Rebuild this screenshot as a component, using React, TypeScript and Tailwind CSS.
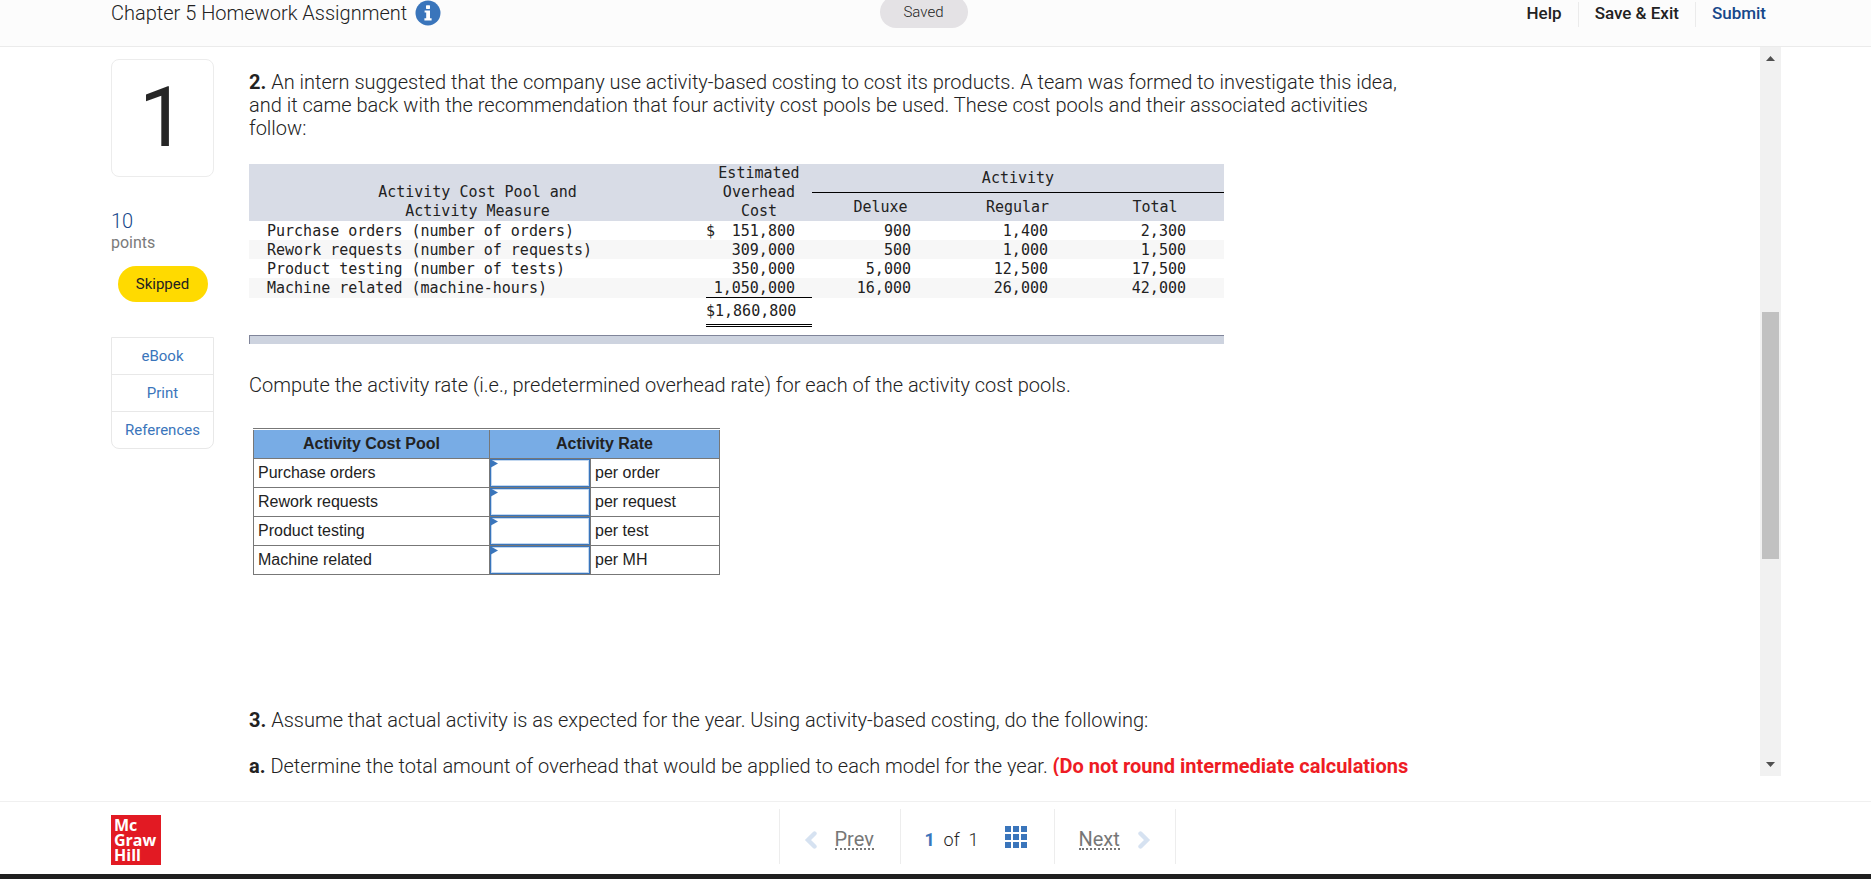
import type { ReactNode } from "react";

const pools = [
  { name: "Purchase orders", measure: "(number of orders)", cost: "151,800", dollar: true, deluxe: "900", regular: "1,400", total: "2,300" },
  { name: "Rework requests", measure: "(number of requests)", cost: "309,000", dollar: false, deluxe: "500", regular: "1,000", total: "1,500" },
  { name: "Product testing", measure: "(number of tests)", cost: "350,000", dollar: false, deluxe: "5,000", regular: "12,500", total: "17,500" },
  { name: "Machine related", measure: "(machine-hours)", cost: "1,050,000", dollar: false, deluxe: "16,000", regular: "26,000", total: "42,000" },
];

const rates = [
  { id: "rate-orders", pool: "Purchase orders", unit: "per order" },
  { id: "rate-requests", pool: "Rework requests", unit: "per request" },
  { id: "rate-tests", pool: "Product testing", unit: "per test" },
  { id: "rate-mh", pool: "Machine related", unit: "per MH" },
];

function InfoIcon() {
  return (
    <svg viewBox="0 0 26 26" className="size-[26px]" aria-hidden="true">
      <circle cx="13" cy="13" r="12.5" fill="#3a75bb" />
      <rect x="11" y="5.3" width="4" height="3.6" rx="0.6" fill="#fff" />
      <path d="M9.6 10.4H15V18.2H16.6V20.4H9.4V18.2H11.2V12.6H9.6Z" fill="#fff" />
    </svg>
  );
}

function Chevron({ direction }: { direction: "left" | "right" }) {
  return (
    <svg viewBox="0 0 14 18" className="h-[18px] w-[14px]" aria-hidden="true">
      <path
        d={direction === "left" ? "M10.5 2.5 4 9l6.5 6.5" : "M3.5 2.5 10 9l-6.5 6.5"}
        fill="none"
        stroke="#d6e2f1"
        strokeWidth="4.4"
        strokeLinecap="round"
        strokeLinejoin="miter"
      />
    </svg>
  );
}

function GridIcon() {
  return (
    <svg viewBox="0 0 22 22" className="size-[22px]" fill="#3a75bb" aria-hidden="true">
      {[0, 8, 16].map((y) => [0, 8, 16].map((x) => <rect key={x + "-" + y} x={x} y={y} width="6" height="6" />))}
    </svg>
  );
}

function Header() {
  return (
    <header className="grid h-[47px] shrink-0 grid-cols-[1fr_auto_1fr] items-start border-b border-[#ebebeb] bg-[#fcfcfc] pr-[135px] pl-[111px]">
      <div className="flex items-center gap-2">
        <h1 className="text-[20px] leading-6 font-light">Chapter 5 Homework Assignment</h1>
        <button type="button" aria-label="Assignment information">
          <InfoIcon />
        </button>
      </div>
      <div className="-mt-1 flex h-8 w-[88px] items-center justify-center rounded-full bg-[#e4e2e5] text-[15px] leading-5 font-light">
        Saved
      </div>
      <nav className="-mr-[30px] flex items-center justify-end pt-[2px] text-[17px] leading-[22px] font-medium whitespace-nowrap">
        <button type="button" className="h-[25px] border-r border-[#ebebeb] pr-4 pb-[3px]">Help</button>
        <button type="button" className="h-[25px] border-r border-[#ebebeb] px-4 pb-[3px]">Save &amp; Exit</button>
        <button type="button" className="h-[25px] pb-[3px] pl-4 text-[#16478a]">Submit</button>
      </nav>
    </header>
  );
}

function SideLink({ children, last = false }: { children: ReactNode; last?: boolean }) {
  return (
    <li className={last ? "" : "border-b border-[#e8e8e8]"}>
      <a href="#" className="flex h-9 items-center justify-center">{children}</a>
    </li>
  );
}

function Sidebar() {
  return (
    <aside className="w-[103px] shrink-0 pt-3">
      <div className="flex h-[118px] items-center justify-center rounded-lg border border-[#ececec] text-[84px] leading-none text-[#262626]">
        1
      </div>
      <div className="pt-8">
        <div className="text-[20px] leading-6 font-light text-[#16478a]">10</div>
        <div className="text-[16px] leading-5 text-[#7a7a7a]">points</div>
      </div>
      <div className="mx-auto mt-[13px] flex h-9 w-[90px] items-center justify-center rounded-full bg-[#ffda00] text-[15px]">
        Skipped
      </div>
      <ul className="mt-[35px] rounded-b-lg border border-[#e8e8e8] text-[15px] text-[#3a75bb]">
        <SideLink>eBook</SideLink>
        <SideLink>Print</SideLink>
        <SideLink last>References</SideLink>
      </ul>
    </aside>
  );
}

function CostTable() {
  return (
    <div className="w-[975px] font-['DejaVu_Sans_Mono',monospace] text-[15px] leading-[19px]">
      <table className="w-full table-fixed border-collapse">
        <colgroup>
          <col />
          <col className="w-[106px]" />
          <col className="w-[137px]" />
          <col className="w-[137px]" />
          <col className="w-[138px]" />
        </colgroup>
        <thead className="bg-[#d8dce6]">
          <tr className="h-[28px]">
            <th rowSpan={2} className="p-0 align-bottom font-normal">
              Activity Cost Pool and
              <br />
              Activity Measure
            </th>
            <th rowSpan={2} className="p-0 align-bottom font-normal">
              Estimated Overhead Cost
            </th>
            <th colSpan={3} className="border-b border-black p-0 pt-px font-normal">Activity</th>
          </tr>
          <tr className="h-[29px]">
            <th className="p-0 pt-px font-normal">Deluxe</th>
            <th className="p-0 pt-px font-normal">Regular</th>
            <th className="p-0 pt-px font-normal">Total</th>
          </tr>
        </thead>
        <tbody className="leading-[18px]">
          {pools.map((p) => (
            <tr key={p.name} className="even:bg-[#f7f7f7]">
              <td className="p-0 pt-px pl-[18px]">{p.name} {p.measure}</td>
              <td className="p-0 pt-px">
                <div className="flex justify-between pr-[17px]">
                  <span>{p.dollar ? "$" : ""}</span>
                  <span>{p.cost}</span>
                </div>
              </td>
              <td className="p-0 pt-px pr-[38px] text-right">{p.deluxe}</td>
              <td className="p-0 pt-px pr-[38px] text-right">{p.regular}</td>
              <td className="p-0 pt-px pr-[38px] text-right">{p.total}</td>
            </tr>
          ))}
        </tbody>
        <tfoot>
          <tr className="h-7">
            <td className="p-0" />
            <td className="border-t border-b-3 border-t-black border-b-black p-0 pr-[17px] text-right [border-bottom-style:double]">$1,860,800</td>
            <td className="p-0" colSpan={3} />
          </tr>
        </tfoot>
      </table>
      <div className="mt-2 h-[9px] border-t border-l border-[#80859a] bg-[#cdd3df]" />
    </div>
  );
}

function RateTable() {
  return (
    <div className="ml-1 w-[467px] border-t border-[#777] pt-px font-['Liberation_Sans',sans-serif] text-[16px] leading-5">
      <table className="w-full table-fixed border-collapse">
        <colgroup>
          <col className="w-[236px]" />
          <col className="w-[101px]" />
          <col />
        </colgroup>
        <thead>
          <tr className="h-7 bg-[#78ace5]">
            <th className="border border-t-0 border-[#777] p-0">Activity Cost Pool</th>
            <th colSpan={2} className="border border-t-0 border-[#777] p-0">Activity Rate</th>
          </tr>
        </thead>
        <tbody>
          {rates.map((r) => (
            <tr key={r.id} className="h-[29px]">
              <td className="border border-[#777] p-0 pl-1">
                <label htmlFor={r.id}>{r.pool}</label>
              </td>
              <td className="border border-[#777] p-0">
                <div className="relative">
                  <input
                    id={r.id}
                    type="text"
                    className="block h-[28px] w-full border border-[#3a75bb] bg-white px-2 text-right inset-ring-1 inset-ring-[#c3d8f0] outline-none"
                  />
                  <svg viewBox="0 0 8 9" className="absolute top-0 left-0 h-[9px] w-2" aria-hidden="true">
                    <path d="M0 0 8 4.5 0 9Z" fill="#3a75bb" />
                  </svg>
                </div>
              </td>
              <td className="border border-[#777] p-0 pl-1">{r.unit}</td>
            </tr>
          ))}
        </tbody>
      </table>
    </div>
  );
}

function Question() {
  return (
    <main className="min-w-0 flex-1 pt-6 pl-[35px] text-[20px] leading-[23px] font-light">
      <p className="w-[1180px]">
        <strong className="font-bold">2.</strong> An intern suggested that the company use activity-based costing to cost its
        products. A team was formed to investigate this idea, and it came back with the recommendation that four activity
        cost pools be used. These cost pools and their associated activities follow:
      </p>
      <div className="mt-6 font-normal">
        <CostTable />
      </div>
      <p className="mt-[30px]">
        Compute the activity rate (i.e., predetermined overhead rate) for each of the activity cost pools.
      </p>
      <div className="mt-[31px] font-normal">
        <RateTable />
      </div>
      <p className="mt-[134px]">
        <strong className="font-bold">3.</strong> Assume that actual activity is as expected for the year. Using
        activity-based costing, do the following:
      </p>
      <p className="mt-[23px] w-[1180px]">
        <strong className="font-bold">a.</strong> Determine the total amount of overhead that would be applied to each model
        for the year. <strong className="font-bold text-[#ee1c24]">(Do not round intermediate calculations</strong>
      </p>
    </main>
  );
}

function ScrollRail() {
  return (
    <div className="mr-[90px] flex w-[21px] shrink-0 flex-col items-center bg-[#f1f1f1] py-[9px]">
      <svg viewBox="0 0 9 5" className="h-[5px] w-[9px]" aria-hidden="true">
        <path d="M0 5 4.5 0 9 5Z" fill="#505050" />
      </svg>
      <div className="flex w-full flex-1 flex-col items-center py-1">
        <div className="flex-[247]" />
        <div className="w-[17px] flex-[247] bg-[#c1c1c1]" />
        <div className="flex-[199]" />
      </div>
      <svg viewBox="0 0 9 5" className="h-[5px] w-[9px]" aria-hidden="true">
        <path d="M0 0H9L4.5 5Z" fill="#505050" />
      </svg>
    </div>
  );
}

function Footer() {
  return (
    <footer className="shrink-0 border-t border-b-[5px] border-t-[#f0f0f0] border-b-[#1f1f1f]">
      <div className="grid h-[72px] grid-cols-[1fr_auto_1fr] pt-[7px] pr-[28px] pl-[111px]">
        <div className="mt-[6px] flex size-[50px] flex-col bg-[#e21a23] pt-[3px] pl-[3px] font-['Open_Sans',sans-serif] text-[16px] leading-[15px] font-bold text-white">
          <span>Mc</span>
          <span>Graw</span>
          <span>Hill</span>
        </div>
        <nav className="flex h-[55px] items-center border-x border-[#ededed] text-[20px]">
          <button type="button" className="flex h-full w-[121px] items-center gap-[17px] border-r border-[#ededed] pt-[6px] pl-6 text-[#777]">
            <Chevron direction="left" />
            <span className="border-b-2 border-dotted border-[#777] leading-[18px]">Prev</span>
          </button>
          <div className="flex h-full w-[154px] items-center justify-between border-r border-[#ededed] pr-[27px] pl-6">
            <span className="pt-[5px] text-[18px] font-light whitespace-pre">
              <strong className="font-bold text-[#3a75bb]">1</strong>
              {"  of  1"}
            </span>
            <button type="button" aria-label="Question list">
              <GridIcon />
            </button>
          </div>
          <button type="button" className="flex h-full w-[120px] items-center gap-[17px] pt-[6px] pl-6 text-[#777]">
            <span className="border-b-2 border-dotted border-[#777] leading-[18px]">Next</span>
            <Chevron direction="right" />
          </button>
        </nav>
      </div>
    </footer>
  );
}

export default function App() {
  return (
    <div className="flex h-screen flex-col overflow-hidden bg-white font-['Roboto',sans-serif] text-[#222]">
      <Header />
      <div className="mb-[25px] flex min-h-0 flex-1 overflow-hidden pl-[111px]">
        <Sidebar />
        <Question />
        <ScrollRail />
      </div>
      <Footer />
    </div>
  );
}
